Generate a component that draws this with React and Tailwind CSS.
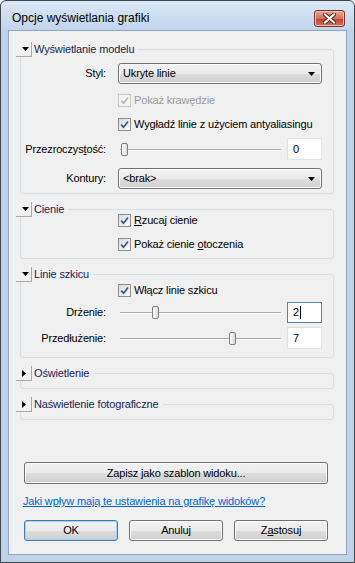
import React from "react";

const btnFace =
  "border border-[#707070] rounded-[3px] bg-[linear-gradient(to_bottom,#f2f2f2_0%,#ebebeb_50%,#dddddd_51%,#cfcfcf_100%)] shadow-[inset_0_0_0_1px_#fbfbfb]";

function Check({ disabled }) {
  return (
    <span
      className={`flex h-[13px] w-[13px] shrink-0 items-center justify-center border ${
        disabled ? "border-[#c4c4c4] bg-[#f5f5f5]" : "border-[#8e8f8f] bg-[linear-gradient(135deg,#d6d9de,#fbfbfb)]"
      }`}
    >
      <svg width="9" height="9" viewBox="0 0 9 9">
        <path d="M1.2 4.6 L3.6 7.2 L8 1.4" fill="none" stroke={disabled ? "#b8b8b8" : "#41558a"} strokeWidth="1.7" />
      </svg>
    </span>
  );
}

function CheckRow({ disabled, children, className }) {
  return (
    <div className={`flex h-[16px] items-center ${className || ""}`}>
      <Check disabled={disabled} />
      <span className={`ml-[3px] ${disabled ? "text-[#9a9a9a]" : ""}`}>{children}</span>
    </div>
  );
}

function Combo({ value }) {
  return (
    <div className={`flex h-[21px] w-full items-center justify-between pl-[4px] pr-[6px] ${btnFace}`}>
      <span>{value}</span>
      <svg width="7" height="4" viewBox="0 0 7 4">
        <path d="M0 0h7L3.5 4z" fill="#000" />
      </svg>
    </div>
  );
}

function Slider({ thumb }) {
  return (
    <div className="relative h-[13px] w-[165px]">
      <div className="absolute left-[2px] right-[2px] top-[6px] h-[2px] border-t border-[#a9a9a9] bg-white" />
      <div
        className={`absolute top-0 h-[13px] w-[7px] rounded-[2px] border border-[#7d7d7d] bg-[linear-gradient(to_right,#fdfdfd,#d9d9d9)] ${thumb}`}
      />
    </div>
  );
}

function Field({ value, focus, tall }) {
  return (
    <div
      className={`ml-[4px] flex w-[35px] items-center border bg-white pl-[5px] ${tall ? "h-[22px]" : "h-[21px]"} ${
        focus ? "border-[#4a86b8]" : "border-[#dfe2e6]"
      }`}
    >
      {value}
      {focus && <span className="ml-px h-[13px] w-px bg-black" />}
    </div>
  );
}

function Row({ label, className, children }) {
  return (
    <div className={`flex items-center ${className || ""}`}>
      <div className="w-[85px] text-right">{label}</div>
      <div className="ml-[12px] flex flex-1 items-center">{children}</div>
    </div>
  );
}

function Group({ title, open, className, children }) {
  return (
    <div className={`relative ml-[11px] mr-[12px] pt-[7px] ${className || ""}`}>
      <div className="rounded-[3px] border border-[#d5dfe5]">{children}</div>
      <div className="absolute -left-[4px] top-0 flex h-[15px] items-center bg-[#f0f0f0] pr-[4px]">
        <span className="flex h-[15px] w-[16px] items-center border-b border-r border-[#a8a8a8] pl-[6px]">
          {open ? (
            <svg width="7" height="4" viewBox="0 0 7 4">
              <path d="M0 0h7L3.5 4z" fill="#000" />
            </svg>
          ) : (
            <svg width="4" height="7" viewBox="0 0 4 7">
              <path d="M0 0v7L4 3.5z" fill="#000" />
            </svg>
          )}
        </span>
        <span className="ml-[2px] text-[#1a2350]">{title}</span>
      </div>
    </div>
  );
}

function Button({ children, primary, className }) {
  return (
    <div
      className={`flex h-[21px] items-center justify-center rounded-[3px] border bg-[linear-gradient(to_bottom,#f2f2f2_0%,#ebebeb_50%,#dddddd_51%,#cfcfcf_100%)] ${
        primary
          ? "border-[#3c7fb1] shadow-[inset_0_0_0_1px_#9fd5f2]"
          : "border-[#707070] shadow-[inset_0_0_0_1px_#fbfbfb]"
      } ${className || ""}`}
    >
      {children}
    </div>
  );
}

export default function App() {
  return (
    <div className="flex h-[563px] w-[355px] flex-col rounded-t-[6px] border border-[#3e4650] bg-[#bed3ea] font-['Liberation_Sans',Arial,sans-serif] text-black">
      <div className="flex h-[29px] items-start rounded-t-[6px] bg-[linear-gradient(to_bottom,#dce8f5,#c0d5ec)] pl-[11px] pr-[9px]">
        <span className="mt-[9px] text-[12px] leading-[16px]">Opcje wyświetlania grafiki</span>
        <div className="ml-auto mt-[9px] flex h-[17px] w-[31px] items-center justify-center rounded-[3px] border border-[#7a3127] bg-[linear-gradient(to_bottom,#e9a898,#d0705c_50%,#c1452e_55%,#d2705a)] shadow-[inset_0_0_0_1px_#f0bfb2]">
          <svg width="13" height="11" viewBox="0 0 13 11">
            <path d="M2 1.5 L11 9.5 M11 1.5 L2 9.5" stroke="#5a1d15" strokeWidth="4" strokeLinecap="square" />
            <path d="M2 1.5 L11 9.5 M11 1.5 L2 9.5" stroke="#ffffff" strokeWidth="2.2" strokeLinecap="square" />
          </svg>
        </div>
      </div>

      <div className="mx-[7px] mb-[7px] flex flex-1 flex-col border border-[#8fa6c2] bg-[#f0f0f0] pt-[11px] text-[11px] leading-[15px] tracking-[-0.15px]">
        <Group title="Wyświetlanie modelu" open>
          <div className="pb-[4px] pr-[11px] pt-[13px]">
            <Row label="Styl:" className="h-[21px]">
              <Combo value="Ukryte linie" />
            </Row>
            <Row label="" className="mt-[8px] h-[16px]">
              <CheckRow disabled>Pokaż krawędzie</CheckRow>
            </Row>
            <Row label="" className="mt-[8px] h-[16px]">
              <CheckRow>Wygładź linie z użyciem antyaliasingu</CheckRow>
            </Row>
            <Row
              label={
                <span>
                  Przezroczys<u>t</u>ość:
                </span>
              }
              className="mt-[6px] h-[22px]"
            >
              <Slider thumb="left-[3px]" />
              <Field value="0" tall />
            </Row>
            <Row label="Kontury:" className="mt-[8px] h-[21px]">
              <Combo value="<brak>" />
            </Row>
          </div>
        </Group>

        <Group title="Cienie" open className="mt-[8px]">
          <div className="pb-[6px] pl-[97px] pt-[2px]">
            <CheckRow>
              <u>R</u>zucaj cienie
            </CheckRow>
            <CheckRow className="mt-[8px]">
              Pokaż cienie <u>o</u>toczenia
            </CheckRow>
          </div>
        </Group>

        <Group title="Linie szkicu" open className="mt-[8px]">
          <div className="pb-[8px] pr-[11px] pt-[7px]">
            <Row label="" className="h-[16px]">
              <CheckRow>Włącz linie szkicu</CheckRow>
            </Row>
            <Row label="Drżenie:" className="mt-[4px] h-[21px]">
              <Slider thumb="left-[34px]" />
              <Field value="2" focus />
            </Row>
            <Row label="Przedłużenie:" className="mt-[4px] h-[22px]">
              <Slider thumb="left-[111px]" />
              <Field value="7" tall />
            </Row>
          </div>
        </Group>

        <Group title="Oświetlenie" className="mt-[8px]">
          <div className="h-[14px]" />
        </Group>

        <Group title="Naświetlenie fotograficzne" className="mt-[8px]">
          <div className="h-[14px]" />
        </Group>

        <div className="mt-auto pb-[13px]">
          <Button className="ml-[15px] w-[304px] h-[22px]">Zapisz jako szablon widoku...</Button>
          <div className="ml-[14px] mt-[10px] text-[#0066cc] underline">
            Jaki wpływ mają te ustawienia na grafikę widoków?
          </div>
          <div className="ml-[15px] mt-[11px] flex gap-[11px]">
            <Button primary className="w-[94px]">
              OK
            </Button>
            <Button className="w-[94px]">Anuluj</Button>
            <Button className="w-[94px]">
              Z<u>a</u>stosuj
            </Button>
          </div>
        </div>
      </div>
    </div>
  );
}
